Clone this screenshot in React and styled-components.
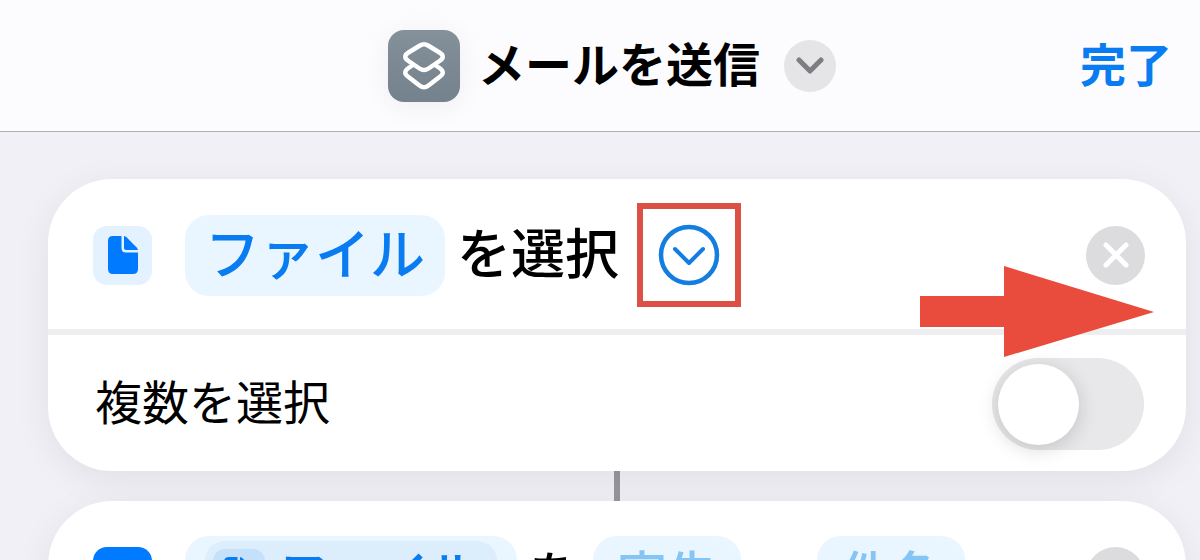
import styled, { createGlobalStyle } from "styled-components";

const GlobalStyle = createGlobalStyle`
	*,
	*::before,
	*::after {
		box-sizing: border-box;
		margin: 0;
		padding: 0;
	}

	html,
	body,
	#root {
		height: 100%;
	}

	body {
		overflow: hidden;
		background-color: #f1f0f6;
		color: #000;
		font-family: "Liberation Sans", "Noto Sans CJK JP", sans-serif;
	}

	button {
		border: none;
		background: none;
		font: inherit;
		color: inherit;
		cursor: pointer;
	}
`;

const Page = styled.div`
	height: 100%;
	overflow: hidden;
`;

const Header = styled.header`
	display: grid;
	grid-template-columns: 1fr auto 1fr;
	align-items: center;
	height: 132px;
	padding: 0 28px 0 24px;
	border-bottom: 1px solid #b0b0b4;
	background-color: #fcfcfe;
`;

const TitleBox = styled.div`
	grid-column: 2;
	display: flex;
	align-items: center;
	gap: 18px;
	margin-left: 28px;
`;

const AppIcon = styled.span`
	display: grid;
	place-items: center;
	width: 72px;
	height: 72px;
	border-radius: 16px;
	background: linear-gradient(#84909a, #74828d);
	box-shadow: 0 4px 28px rgba(0, 0, 0, 0.06);
`;

const Title = styled.h1`
	padding-right: 6px;
	font-size: 47px;
	line-height: 72px;
	font-weight: 700;
	white-space: nowrap;
`;

const TitleMenuButton = styled.button`
	display: grid;
	place-items: center;
	width: 52px;
	height: 52px;
	border-radius: 50%;
	background-color: #e5e5e8;
	color: #7e7e82;
`;

const DoneButton = styled.button`
	justify-self: end;
	color: #087cf0;
	font-size: 46px;
	line-height: 72px;
	font-weight: 600;
`;

const Actions = styled.main`
	display: flex;
	flex-direction: column;
	padding: 47px 14px 0 48px;
`;

const Card = styled.section`
	position: relative;
	border-radius: 64px;
	background-color: #fff;
	box-shadow: 0 8px 36px rgba(0, 0, 0, 0.07);
`;

const ActionRow = styled.div`
	display: flex;
	align-items: center;
	height: 150px;
	padding: ${({ $compact }) => ($compact ? "0" : "2px")} 41px 0 45px;
	font-size: ${({ $compact }) => ($compact ? "50px" : "54px")};
	line-height: 80px;
	white-space: nowrap;
`;

const ActionIcon = styled.span`
	display: grid;
	place-items: center;
	flex: none;
	width: 59px;
	height: 59px;
	margin-right: 33px;
	border-radius: 14px;
	background: ${({ $solid }) => ($solid ? "#007aff" : "#e3f2fe")};
	color: #007aff;
`;

const Token = styled.button`
	display: flex;
	align-items: center;
	height: 81px;
	padding: 0 ${({ $placeholder }) => ($placeholder ? "24px" : "20px")};
	border-radius: 24px;
	background-color: #eaf6ff;
	color: ${({ $placeholder }) => ($placeholder ? "#85c5f6" : "#087cf0")};
	font-size: ${({ $large }) => ($large ? "55px" : "inherit")};
	font-weight: 500;
`;

const Particle = styled.span`
	margin: 0 14px 0 12px;
	font-weight: 500;
`;

const Highlight = styled.span`
	display: grid;
	place-items: center;
	width: 104px;
	height: 104px;
	margin: 0 4px;
	border: 6px solid #dd5145;
`;

const ExpandButton = styled.button`
	display: grid;
	place-items: center;
	width: 62px;
	height: 62px;
	color: #147de0;
`;

const RemoveButton = styled.button`
	display: grid;
	place-items: center;
	flex: none;
	width: 59px;
	height: 59px;
	margin-left: auto;
	border-radius: 50%;
	background-color: #dcdcde;
	color: #fff;
`;

const OptionRow = styled.label`
	display: flex;
	align-items: center;
	justify-content: space-between;
	height: 142px;
	padding: 2px 42px 0 47px;
	border-top: 6px solid #eeeef0;
	font-size: 47px;
	line-height: 72px;
`;

const Switch = styled.input`
	appearance: none;
	display: flex;
	align-items: center;
	width: 152px;
	height: 92px;
	padding: 0 6px;
	border-radius: 46px;
	background-color: #e8e8ea;
	cursor: pointer;

	&::before {
		content: "";
		width: 81px;
		height: 81px;
		border-radius: 50%;
		background-color: #fff;
		box-shadow: 0 4px 20px rgba(0, 0, 0, 0.16);
	}

	&:checked {
		justify-content: flex-end;
		background-color: #34c759;
	}
`;

const Connector = styled.div`
	align-self: center;
	width: 6px;
	height: 30px;
	background-color: #97989d;
`;

const Variable = styled.span`
	display: flex;
	align-items: center;
	gap: 14px;
	height: 70px;
	padding: 0 18px 0 8px;
	border-radius: 20px;
	background-color: #dcedfc;
`;

const VariableIcon = styled.span`
	display: grid;
	place-items: center;
	width: 52px;
	height: 54px;
	border-radius: 12px;
	background-color: #c4e0fb;
`;

const Arrow = styled.svg`
	position: absolute;
	top: 87px;
	right: 32px;
	pointer-events: none;
`;

function Chevron({ width, height, stroke }) {
	return (
		<svg width={width} height={height} viewBox={`0 0 ${width} ${height}`}>
			<path
				d={`M3 3L${width / 2} ${height - 3}L${width - 3} 3`}
				fill="none"
				stroke="currentColor"
				strokeWidth={stroke}
				strokeLinecap="round"
				strokeLinejoin="round"
			/>
		</svg>
	);
}

function ShortcutsLogo() {
	return (
		<svg width="72" height="72" viewBox="0 0 72 72" fill="none">
			<g stroke="#fff" strokeWidth="4.5" strokeLinejoin="round">
				<path d="M32 15.500Q36 13 40 15.500L51.500 22.500Q58 26.500 51.500 31L40.500 38.500Q36 41.500 31.500 38.500L20.500 31Q14 26.500 20.500 22.500Z" />
				<path d="M25 35L20.500 38Q14 42.500 20.500 47L31.500 55.500Q36 59 40.500 55.500L51.500 47Q58 42.500 51.500 38L47 35" />
			</g>
		</svg>
	);
}

function FileIcon() {
	return (
		<svg width="30" height="38" viewBox="0 0 30 38" fill="currentColor">
			<path d="M5 0H13.5V12Q13.5 16.5 18 16.5H30V33Q30 38 25 38H5Q0 38 0 33V5Q0 0 5 0Z" />
			<path d="M16 0Q17.500 0.300 18.500 1.300L28.700 11.500Q29.700 12.500 30 14H18Q16 14 16 12Z" />
		</svg>
	);
}

function App() {
	return (
		<Page lang="ja">
			<GlobalStyle />
			<Header>
				<TitleBox>
					<AppIcon>
						<ShortcutsLogo />
					</AppIcon>
					<Title>メールを送信</Title>
					<TitleMenuButton aria-label="メニュー">
						<Chevron width={28} height={17} stroke={5} />
					</TitleMenuButton>
				</TitleBox>
				<DoneButton>完了</DoneButton>
			</Header>

			<Actions>
				<Card>
					<ActionRow>
						<ActionIcon>
							<FileIcon />
						</ActionIcon>
						<Token $large>ファイル</Token>
						<Particle>を選択</Particle>
						<Highlight>
							<ExpandButton aria-label="詳細を表示">
								<svg width="62" height="62" viewBox="0 0 62 62" fill="none">
									<circle
										cx="31"
										cy="31"
										r="28"
										stroke="currentColor"
										strokeWidth="4.5"
									/>
									<path
										d="M17 25L31 39L45 25"
										stroke="currentColor"
										strokeWidth="4"
										strokeLinecap="round"
										strokeLinejoin="round"
									/>
								</svg>
							</ExpandButton>
						</Highlight>
						<RemoveButton aria-label="削除">
							<svg width="26" height="26" viewBox="0 0 26 26">
								<path
									d="M3 3L23 23M23 3L3 23"
									stroke="currentColor"
									strokeWidth="5"
									strokeLinecap="round"
								/>
							</svg>
						</RemoveButton>
					</ActionRow>
					<OptionRow>
						複数を選択
						<Switch type="checkbox" role="switch" />
					</OptionRow>
					<Arrow width="234" height="92" viewBox="0 0 234 92">
						<path d="M0 30H84V0L234 46L84 91V61H0Z" fill="#e94b3c" />
					</Arrow>
				</Card>

				<Connector />

				<Card>
					<ActionRow $compact>
						<ActionIcon $solid />
						<Token>
							<Variable>
								<VariableIcon>
									<FileIcon />
								</VariableIcon>
								ファイル
							</Variable>
						</Token>
						<Particle>を</Particle>
						<Token $placeholder>宛先</Token>
						<Particle>へ</Particle>
						<Token $placeholder>件名</Token>
						<RemoveButton aria-label="削除" />
					</ActionRow>
				</Card>
			</Actions>
		</Page>
	);
}

export default App;
